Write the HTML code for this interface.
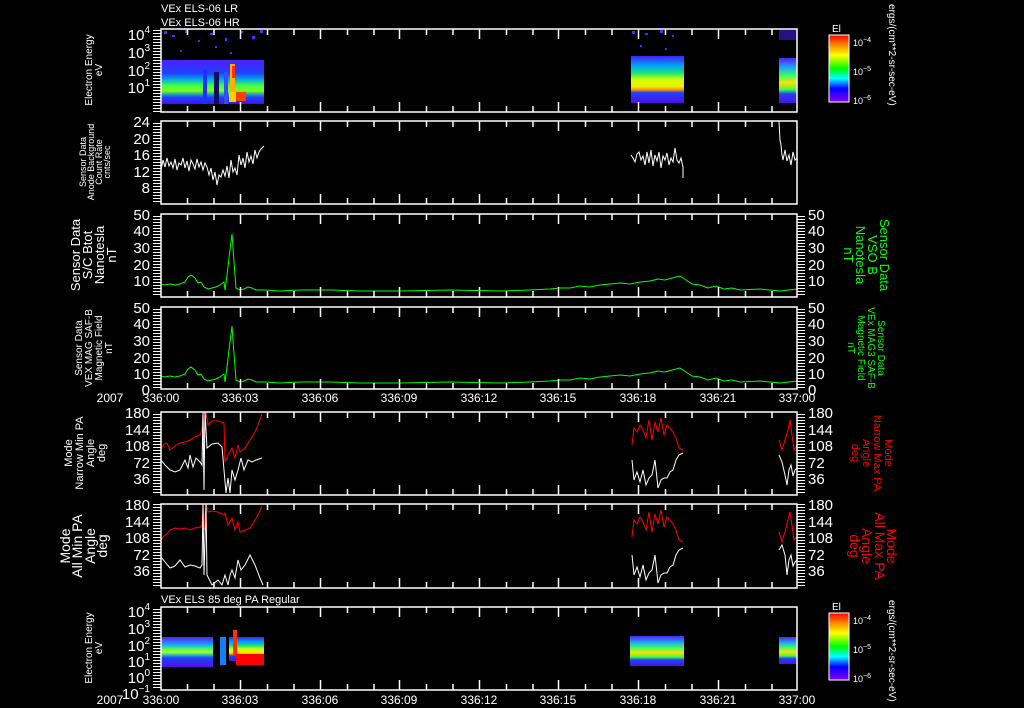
<!DOCTYPE html>
<html><head><meta charset="utf-8"><style>
html,body{margin:0;padding:0;background:#000;}
svg{display:block}
text{font-family:"Liberation Sans",sans-serif;fill:#fff}
</style></head><body>
<svg width="1024" height="708" viewBox="0 0 1024 708" xmlns="http://www.w3.org/2000/svg">
<defs>
<pattern id="lad" width="8" height="3" patternUnits="userSpaceOnUse"><rect x="0" y="0" width="8" height="1" fill="#fff"/></pattern>
<linearGradient id="cb" x1="0" y1="0" x2="0" y2="1">
<stop offset="0" stop-color="#f00"/><stop offset="0.15" stop-color="#f80"/><stop offset="0.3" stop-color="#ff0"/><stop offset="0.5" stop-color="#0f0"/><stop offset="0.65" stop-color="#0ff"/><stop offset="0.8" stop-color="#00f"/><stop offset="1" stop-color="#80f"/></linearGradient>
<linearGradient id="sp1" x1="0" y1="0" x2="0" y2="1">
<stop offset="0" stop-color="#5020ff"/><stop offset="0.3" stop-color="#2040ff"/><stop offset="0.45" stop-color="#00b0e0"/><stop offset="0.58" stop-color="#40ff40"/><stop offset="0.7" stop-color="#80ff20"/><stop offset="0.78" stop-color="#20a0b0"/><stop offset="0.85" stop-color="#2040ff"/><stop offset="1" stop-color="#4010f0"/></linearGradient>
<linearGradient id="sp2" x1="0" y1="0" x2="0" y2="1">
<stop offset="0" stop-color="#4020ff"/><stop offset="0.2" stop-color="#00a0ff"/><stop offset="0.35" stop-color="#10e080"/><stop offset="0.5" stop-color="#d0ff00"/><stop offset="0.65" stop-color="#f0f000"/><stop offset="0.72" stop-color="#ff9000"/><stop offset="0.78" stop-color="#2040ff"/><stop offset="1" stop-color="#5010e0"/></linearGradient>
<linearGradient id="sp3" x1="0" y1="0" x2="0" y2="1">
<stop offset="0" stop-color="#5020ff"/><stop offset="0.2" stop-color="#20a0ff"/><stop offset="0.4" stop-color="#40ff60"/><stop offset="0.55" stop-color="#ffe000"/><stop offset="0.7" stop-color="#40ff40"/><stop offset="0.8" stop-color="#2040ff"/><stop offset="1" stop-color="#5010e0"/></linearGradient>
<linearGradient id="sp4" x1="0" y1="0" x2="0" y2="1">
<stop offset="0" stop-color="#5020ff"/><stop offset="0.25" stop-color="#20a0ff"/><stop offset="0.4" stop-color="#40ff60"/><stop offset="0.5" stop-color="#c0ff20"/><stop offset="0.6" stop-color="#20c0c0"/><stop offset="0.7" stop-color="#2040ff"/><stop offset="1" stop-color="#5010e0"/></linearGradient>
</defs>

<text x="161" y="12" font-size="11">VEx ELS-06 LR</text>
<text x="161" y="26" font-size="11">VEx ELS-06 HR</text>
<text x="161" y="603" font-size="11">VEx ELS 85 deg PA Regular</text>

<g>
<g fill="#6020ff">
<rect x="164" y="31" width="3" height="3"/><rect x="172" y="35" width="3" height="2"/><rect x="185" y="30" width="3" height="3"/><rect x="198" y="40" width="2" height="2"/><rect x="210" y="33" width="3" height="2"/><rect x="225" y="38" width="2" height="3"/><rect x="240" y="31" width="3" height="2"/><rect x="252" y="36" width="3" height="3"/><rect x="260" y="30" width="3" height="3"/><rect x="180" y="50" width="2" height="2"/><rect x="230" y="52" width="2" height="2"/><rect x="215" y="46" width="2" height="2"/>
</g>
<rect x="161" y="60" width="103" height="44" fill="url(#sp1)"/>
<rect x="203" y="70" width="4" height="34" fill="#2030ff"/>
<rect x="214" y="72" width="5" height="32" fill="#101060"/>
<rect x="224" y="72" width="4" height="32" fill="#3050ff"/>
<rect x="230" y="64" width="5" height="28" fill="#ffb000"/>
<rect x="232" y="66" width="3" height="12" fill="#ff3000"/>
<rect x="236" y="92" width="10" height="9" fill="#ff4000"/>
<rect x="229" y="92" width="7" height="10" fill="#ffd000"/>
<g fill="#6020ff"><rect x="632" y="31" width="3" height="3"/><rect x="645" y="33" width="3" height="2"/><rect x="660" y="30" width="3" height="3"/><rect x="672" y="35" width="2" height="2"/><rect x="640" y="45" width="2" height="2"/><rect x="665" y="48" width="2" height="2"/></g>
<rect x="631" y="56" width="53" height="47" fill="url(#sp2)"/>
<rect x="779" y="30" width="18" height="10" fill="#5020ff" opacity="0.5"/>
<rect x="779" y="58" width="18" height="45" fill="url(#sp3)"/>
</g>

<g fill="none" stroke="#fff" stroke-width="1">
<polyline points="161,170 163,160 165,167 167,158 169,166 171,162 173,168 175,159 177,170 179,163 181,165 183,158 185,168 187,161 189,171 191,160 193,164 195,169 197,159 199,167 201,162 203,170 205,163 207,167 209,175 211,168 213,180 215,172 217,185 219,175 221,177 223,170 225,176 227,166 229,178 231,160 233,172 235,168 237,175 239,155 241,165 243,158 245,168 247,152 249,162 251,156 253,164 255,150 257,158 259,152 261,149 264,146"/>
<polyline points="631,155 633,158 635,162 637,154 639,152 641,160 643,156 645,165 647,152 649,163 651,150 653,166 655,155 657,161 659,152 661,168 663,156 665,160 667,153 669,165 671,158 673,162 675,148 677,160 679,163 681,158 683,167 683,178"/>
<polyline points="779,121 780,140 781,145 782,155 783,160 785,150 787,161 789,155 791,165 793,152 795,160 797,158"/>
</g>

<polyline id="gl" fill="none" stroke="#0f0" stroke-width="1" points="161,284 165,285 170,284 175,285 180,284 185,282 188,277 191,275 195,278 198,283 201,282 204,287 208,289 212,288 216,287 220,285 224,282 225,290 227,275 229,258 232,234 234,262 236,288 240,290 244,289 248,287 252,288 256,290 265,290 280,291 300,290 330,290 360,291 400,291 450,290 500,291 530,290 550,289 560,288 570,288 580,286 590,287 600,285 610,284 620,283 630,284 640,282 650,281 658,279 665,280 672,278 680,276 686,280 692,284 700,285 708,288 716,286 724,289 732,288 740,290 760,289 780,291 797,289"/>
<use href="#gl" transform="translate(0,92)"/>

<g fill="none" stroke-width="1">
<polyline stroke="#f00" points="161,449 164,444 167,443 170,450 175,446 180,443 185,442 190,440 195,437 200,435 202,430 203,412 204,440 206,412 208,425 212,421 218,421 224,423 225,462 228,455 232,448 235,458 238,445 240,452 245,448 250,440 255,432 258,425 262,414"/>
<polyline stroke="#fff" points="161,460 165,465 170,470 175,472 180,470 185,460 188,468 190,455 193,467 196,458 200,462 202,465 203,412 204,490 205,412 207,448 212,444 218,443 222,447 224,470 226,493 228,478 230,493 232,470 235,480 238,470 241,458 244,470 248,460 252,462 256,460 262,458"/>
<polyline stroke="#f00" points="632,445 634,428 637,432 640,425 643,430 646,438 649,420 652,440 655,422 658,432 661,418 664,435 667,425 670,428 673,432 676,438 679,448 683,450"/>
<polyline stroke="#fff" points="632,460 634,480 637,472 640,482 643,470 646,485 649,478 652,475 655,460 658,488 661,480 664,478 667,478 670,472 673,470 676,460 679,455 683,453"/>
<polyline stroke="#f00" points="779,440 782,450 785,440 788,430 790,420 792,435 794,450 797,445"/>
<polyline stroke="#fff" points="779,455 782,462 785,475 787,485 789,470 791,465 793,476 795,470 797,468"/>
</g>
<g fill="none" stroke-width="1">
<polyline stroke="#f00" points="161,540 164,536 167,534 170,530 175,528 180,529 185,528 190,530 195,528 200,527 202,525 203,504 204,530 206,504 208,512 212,511 218,512 224,515 225,513 228,525 232,518 235,530 238,522 240,532 245,530 250,528 255,520 258,515 262,506"/>
<polyline stroke="#fff" points="161,557 165,562 170,568 175,566 180,560 185,567 190,565 195,566 200,568 202,565 203,504 204,575 206,504 207,575 212,585 218,580 222,585 225,575 228,585 230,575 232,570 235,578 238,560 241,570 245,565 250,555 255,565 260,578 263,585"/>
<polyline stroke="#f00" points="632,537 634,520 637,524 640,517 643,522 646,530 649,512 652,532 655,514 658,524 661,510 664,527 667,517 670,520 673,524 676,530 679,540 683,542"/>
<polyline stroke="#fff" points="632,555 634,575 637,567 640,577 643,565 646,580 649,573 652,570 655,555 658,583 661,575 664,573 667,573 670,567 673,565 676,555 679,550 683,548"/>
<polyline stroke="#f00" points="779,532 782,542 785,532 788,520 790,512 792,525 794,540 797,537"/>
<polyline stroke="#fff" points="779,550 782,545 785,555 787,575 789,560 791,555 793,566 795,562 797,560"/>
</g>

<rect x="161" y="637" width="52" height="30" fill="url(#sp4)"/>
<rect x="220" y="637" width="6" height="28" fill="#1080ff"/>
<rect x="229" y="637" width="35" height="24" fill="url(#sp2)"/>
<rect x="233" y="630" width="4" height="25" fill="#ff3000"/>
<rect x="236" y="654" width="28" height="11" fill="#f00"/>
<rect x="630" y="636" width="54" height="30" fill="url(#sp3)"/>
<rect x="779" y="637" width="18" height="27" fill="url(#sp3)"/>

<g fill="none" stroke="#fff" stroke-width="1.5">
<rect x="161" y="29" width="636" height="83"/>
<rect x="161" y="121" width="636" height="83"/>
<rect x="161" y="214" width="636" height="83"/>
<rect x="161" y="307" width="636" height="82"/>
<rect x="161" y="412" width="636" height="83"/>
<rect x="161" y="504" width="636" height="84"/>
<rect x="161" y="607" width="636" height="83"/>
</g>

<path id="ticks" stroke="#fff" stroke-width="1.5" d="M187.5,29v6M214,29v6M267.5,29v6M294,29v6M347.5,29v6M374,29v6M426.5,29v6M453,29v6M506.5,29v6M533,29v6M585.5,29v6M612,29v6M665.5,29v6M692,29v6M745.5,29v6M772,29v6M240.5,29v10M320.5,29v10M399.5,29v10M479.5,29v10M558.5,29v10M638.5,29v10M718.5,29v10"/>
<use href="#ticks" transform="translate(0,92)"/><use href="#ticks" transform="translate(0,185)"/><use href="#ticks" transform="translate(0,278)"/><use href="#ticks" transform="translate(0,383)"/><use href="#ticks" transform="translate(0,475)"/><use href="#ticks" transform="translate(0,578)"/>
<g transform="translate(0,141) scale(1,-1)"><use href="#ticks"/></g>
<g transform="translate(0,233) scale(1,-1)"><use href="#ticks"/></g>
<g transform="translate(0,326) scale(1,-1)"><use href="#ticks"/></g>
<g transform="translate(0,418) scale(1,-1)"><use href="#ticks"/></g>
<g transform="translate(0,524) scale(1,-1)"><use href="#ticks"/></g>
<g transform="translate(0,617) scale(1,-1)"><use href="#ticks"/></g>
<g transform="translate(0,719) scale(1,-1)"><use href="#ticks"/></g>

<g fill="url(#lad)">
<rect x="153" y="29" width="8" height="83"/>
<rect x="153" y="121" width="8" height="83"/>
<rect x="153" y="214" width="8" height="83"/>
<rect x="153" y="307" width="8" height="82"/>
<rect x="153" y="412" width="8" height="83"/>
<rect x="153" y="504" width="8" height="84"/>
<rect x="153" y="607" width="8" height="83"/>
<rect x="797" y="214" width="8" height="83"/>
<rect x="797" y="307" width="8" height="82"/>
<rect x="797" y="412" width="8" height="83"/>
<rect x="797" y="504" width="8" height="84"/>
</g>

<g font-size="15" text-anchor="end">
<text x="150" y="40">10<tspan font-size="10" dy="-7">4</tspan></text>
<text x="150" y="58">10<tspan font-size="10" dy="-7">3</tspan></text>
<text x="150" y="76">10<tspan font-size="10" dy="-7">2</tspan></text>
<text x="150" y="93">10<tspan font-size="10" dy="-7">1</tspan></text>
<text x="150" y="127">24</text><text x="150" y="144">20</text><text x="150" y="160">16</text><text x="150" y="177">12</text><text x="150" y="193">8</text>
<text x="150" y="220">50</text><text x="150" y="236">40</text><text x="150" y="253">30</text><text x="150" y="270">20</text><text x="150" y="286">10</text>
<text x="150" y="313">50</text><text x="150" y="329">40</text><text x="150" y="346">30</text><text x="150" y="363">20</text><text x="150" y="379">10</text><text x="150" y="395">0</text>
<text x="150" y="418">180</text><text x="150" y="435">144</text><text x="150" y="451">108</text><text x="150" y="468">72</text><text x="150" y="484">36</text>
<text x="150" y="510">180</text><text x="150" y="527">144</text><text x="150" y="543">108</text><text x="150" y="560">72</text><text x="150" y="576">36</text>
<text x="150" y="617">10<tspan font-size="10" dy="-7">4</tspan></text>
<text x="150" y="634">10<tspan font-size="10" dy="-7">3</tspan></text>
<text x="150" y="651">10<tspan font-size="10" dy="-7">2</tspan></text>
<text x="150" y="667">10<tspan font-size="10" dy="-7">1</tspan></text>
<text x="150" y="683">10<tspan font-size="10" dy="-7">0</tspan></text>
<text x="150" y="699">10<tspan font-size="10" dy="-7">−1</tspan></text>
</g>
<g font-size="15">
<text x="808" y="220">50</text><text x="808" y="236">40</text><text x="808" y="253">30</text><text x="808" y="270">20</text><text x="808" y="286">10</text>
<text x="808" y="313">50</text><text x="808" y="329">40</text><text x="808" y="346">30</text><text x="808" y="363">20</text><text x="808" y="379">10</text><text x="808" y="395">0</text>
<text x="808" y="418">180</text><text x="808" y="435">144</text><text x="808" y="451">108</text><text x="808" y="468">72</text><text x="808" y="484">36</text>
<text x="808" y="510">180</text><text x="808" y="527">144</text><text x="808" y="543">108</text><text x="808" y="560">72</text><text x="808" y="576">36</text>
</g>

<g font-size="12" text-anchor="middle">
<text x="110" y="402">2007</text><text x="161" y="402">336:00</text><text x="240" y="402">336:03</text><text x="320" y="402">336:06</text><text x="399" y="402">336:09</text><text x="479" y="402">336:12</text><text x="558" y="402">336:15</text><text x="638" y="402">336:18</text><text x="718" y="402">336:21</text><text x="797" y="402">337:00</text>
<text x="110" y="704">2007</text><text x="161" y="704">336:00</text><text x="240" y="704">336:03</text><text x="320" y="704">336:06</text><text x="399" y="704">336:09</text><text x="479" y="704">336:12</text><text x="558" y="704">336:15</text><text x="638" y="704">336:18</text><text x="718" y="704">336:21</text><text x="797" y="704">337:00</text>
</g>

<g text-anchor="middle">
<text transform="translate(92,70) rotate(-90)" font-size="10">Electron Energy</text>
<text transform="translate(102,70) rotate(-90)" font-size="10">eV</text>
<text transform="translate(86,162) rotate(-90)" font-size="9">Sensor Data</text>
<text transform="translate(94,162) rotate(-90)" font-size="9">Anode Background</text>
<text transform="translate(102,162) rotate(-90)" font-size="9">Count Rate</text>
<text transform="translate(110,162) rotate(-90)" font-size="9">cnts/sec</text>
<text transform="translate(80,255) rotate(-90)" font-size="13">Sensor Data</text>
<text transform="translate(92,255) rotate(-90)" font-size="13">S/C Btot</text>
<text transform="translate(104,255) rotate(-90)" font-size="13">Nanotesla</text>
<text transform="translate(116,255) rotate(-90)" font-size="13">nT</text>
<text transform="translate(82,348) rotate(-90)" font-size="10">Sensor Data</text>
<text transform="translate(92,348) rotate(-90)" font-size="10">VEX MAG SAF-B</text>
<text transform="translate(102,348) rotate(-90)" font-size="10">Magnetic Field</text>
<text transform="translate(112,348) rotate(-90)" font-size="10">nT</text>
<text transform="translate(72,453) rotate(-90)" font-size="11">Mode</text>
<text transform="translate(83,453) rotate(-90)" font-size="11">Narrow Min PA</text>
<text transform="translate(94,453) rotate(-90)" font-size="11">Angle</text>
<text transform="translate(105,453) rotate(-90)" font-size="11">deg</text>
<text transform="translate(70,546) rotate(-90)" font-size="14">Mode</text>
<text transform="translate(82,546) rotate(-90)" font-size="14">All Min PA</text>
<text transform="translate(95,546) rotate(-90)" font-size="14">Angle</text>
<text transform="translate(107,546) rotate(-90)" font-size="14">deg</text>
<text transform="translate(92,648) rotate(-90)" font-size="10">Electron Energy</text>
<text transform="translate(102,648) rotate(-90)" font-size="10">eV</text>
</g>
<g text-anchor="middle">
<text transform="translate(880,255) rotate(90)" font-size="13" style="fill:#0f0">Sensor Data</text>
<text transform="translate(868,255) rotate(90)" font-size="13" style="fill:#0f0">VSO B</text>
<text transform="translate(856,255) rotate(90)" font-size="13" style="fill:#0f0">Nanotesla</text>
<text transform="translate(844,255) rotate(90)" font-size="13" style="fill:#0f0">nT</text>
<text transform="translate(878,348) rotate(90)" font-size="10" style="fill:#0f0">Sensor Data</text>
<text transform="translate(868,348) rotate(90)" font-size="10" style="fill:#0f0">VEx MAG3 SAF-B</text>
<text transform="translate(858,348) rotate(90)" font-size="10" style="fill:#0f0">Magnetic Field</text>
<text transform="translate(848,348) rotate(90)" font-size="10" style="fill:#0f0">nT</text>
<text transform="translate(885,453) rotate(90)" font-size="11" style="fill:#f00">Mode</text>
<text transform="translate(874,453) rotate(90)" font-size="11" style="fill:#f00">Narrow Max PA</text>
<text transform="translate(863,453) rotate(90)" font-size="11" style="fill:#f00">Angle</text>
<text transform="translate(852,453) rotate(90)" font-size="11" style="fill:#f00">deg</text>
<text transform="translate(887,546) rotate(90)" font-size="14" style="fill:#f00">Mode</text>
<text transform="translate(875,546) rotate(90)" font-size="14" style="fill:#f00">All Max PA</text>
<text transform="translate(862,546) rotate(90)" font-size="14" style="fill:#f00">Angle</text>
<text transform="translate(850,546) rotate(90)" font-size="14" style="fill:#f00">deg</text>
<text transform="translate(889,4) rotate(90)" font-size="10" text-anchor="start">ergs/(cm**2-sr-sec-eV)</text>
<text transform="translate(889,600) rotate(90)" font-size="10" text-anchor="start">ergs/(cm**2-sr-sec-eV)</text>
</g>

<rect x="829" y="35" width="20" height="67" fill="url(#cb)" stroke="#fff" stroke-width="1"/>
<text x="832" y="32" font-size="10">El</text>
<g font-size="9"><text x="853" y="46">10<tspan font-size="7" dy="-4">−4</tspan></text><text x="853" y="75">10<tspan font-size="7" dy="-4">−5</tspan></text><text x="853" y="104">10<tspan font-size="7" dy="-4">−6</tspan></text></g>
<rect x="829" y="613" width="20" height="67" fill="url(#cb)" stroke="#fff" stroke-width="1"/>
<text x="832" y="610" font-size="10">El</text>
<g font-size="9"><text x="853" y="624">10<tspan font-size="7" dy="-4">−4</tspan></text><text x="853" y="653">10<tspan font-size="7" dy="-4">−5</tspan></text><text x="853" y="682">10<tspan font-size="7" dy="-4">−6</tspan></text></g>
</svg>
</body></html>
